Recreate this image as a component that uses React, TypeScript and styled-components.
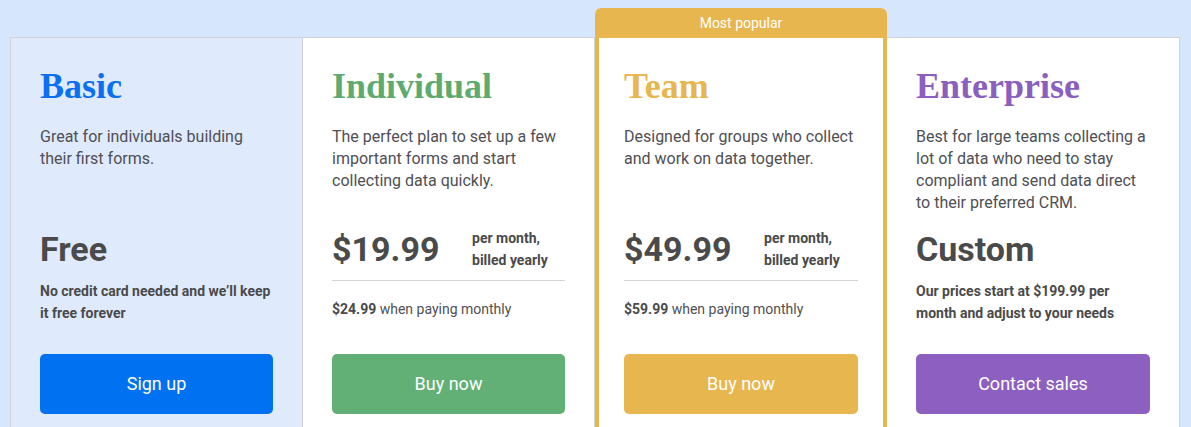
import React from "react";
import styled, { createGlobalStyle } from "styled-components";

const GlobalStyle = createGlobalStyle`
  html, body {
    margin: 0;
    padding: 0;
    background: #d6e6fd;
    font-family: Roboto, "Liberation Sans", Arial, sans-serif;
    overflow: hidden;
  }
  * { box-sizing: border-box; }
`;

const Page = styled.div`
  padding: 8px 10px 40px 10px;
`;

const Grid = styled.div`
  display: grid;
  grid-template-columns: 293px 292px 292px 293px;
  align-items: start;
`;

const Column = styled.div<{ $first?: boolean; $tint?: boolean }>`
  margin-top: 29px;
  border-top: 1px solid #cfd3d9;
  border-right: 1px solid #cfd3d9;
  border-left: ${(p) => (p.$first ? "1px solid #cfd3d9" : "none")};
  border-bottom: 1px solid #cfd3d9;
  background: ${(p) => (p.$tint ? "#dfeafc" : "#ffffff")};
  padding: 27px 29px 40px 29px;
  display: flex;
  flex-direction: column;
`;

const FeaturedColumn = styled.div`
  display: flex;
  flex-direction: column;
  background: #ffffff;
  border-radius: 6px 6px 0 0;
  overflow: hidden;
`;

const Tab = styled.div`
  height: 30px;
  background: #e8b64f;
  color: #ffffff;
  font-size: 14px;
  display: flex;
  align-items: center;
  justify-content: center;
`;

const FeaturedBody = styled.div`
  border: 4px solid #e8b64f;
  border-top: none;
  padding: 27px 25px 40px 25px;
  display: flex;
  flex-direction: column;
`;

const Title = styled.h2<{ $color: string }>`
  margin: 0;
  font-family: "Liberation Serif", "Times New Roman", serif;
  font-weight: 700;
  font-size: 36px;
  line-height: 1.2;
  color: ${(p) => p.$color};
`;

const Description = styled.p`
  margin: 18px 0 0 0;
  font-size: 16px;
  line-height: 22px;
  color: #4f4f55;
  min-height: 88px;
`;

const PriceArea = styled.div`
  margin-top: 13px;
  min-height: 97px;
  display: flex;
  flex-direction: column;
`;

const PriceRow = styled.div<{ $divided?: boolean }>`
  display: flex;
  align-items: center;
  height: ${(p) => (p.$divided ? "54px" : "53px")};
  padding-bottom: ${(p) => (p.$divided ? "9px" : "8px")};
  border-bottom: 1px solid ${(p) => (p.$divided ? "#d3d3d3" : "transparent")};
`;

const Amount = styled.div<{ $fixed?: boolean }>`
  font-size: 34px;
  font-weight: 700;
  line-height: 1.2;
  color: #4a4a4a;
  width: ${(p) => (p.$fixed ? "140px" : "auto")};
  flex: none;
`;

const Period = styled.div`
  font-size: 14px;
  font-weight: 700;
  line-height: 22px;
  color: #4a4a4a;
`;

const Note = styled.div`
  font-size: 14px;
  font-weight: 700;
  line-height: 22px;
  color: #4a4a4a;
`;

const Monthly = styled.div`
  margin-top: 17px;
  font-size: 14px;
  line-height: 22px;
  color: #4f4f55;

  strong {
    font-weight: 700;
    color: #4a4a4a;
  }
`;

const Button = styled.button<{ $bg: string }>`
  margin-top: 30px;
  height: 60px;
  width: 100%;
  border: none;
  border-radius: 5px;
  background: ${(p) => p.$bg};
  color: #ffffff;
  font-family: Roboto, "Liberation Sans", Arial, sans-serif;
  font-size: 18px;
  padding: 0 0 2px 0;
  cursor: pointer;
`;

export default function App() {
  return (
    <>
      <GlobalStyle />
      <Page>
        <Grid>
          <Column $first $tint>
            <Title $color="#0a6ff0">Basic</Title>
            <Description>Great for individuals building their first forms.</Description>
            <PriceArea>
              <PriceRow>
                <Amount>Free</Amount>
              </PriceRow>
              <Note>No credit card needed and we’ll keep it free forever</Note>
            </PriceArea>
            <Button $bg="#0071f0">Sign up</Button>
          </Column>

          <Column>
            <Title $color="#5dab6f">Individual</Title>
            <Description>
              The perfect plan to set up a few important forms and start collecting data quickly.
            </Description>
            <PriceArea>
              <PriceRow $divided>
                <Amount $fixed>$19.99</Amount>
                <Period>
                  per month,
                  <br />
                  billed yearly
                </Period>
              </PriceRow>
              <Monthly>
                <strong>$24.99</strong> when paying monthly
              </Monthly>
            </PriceArea>
            <Button $bg="#62b075">Buy now</Button>
          </Column>

          <FeaturedColumn>
            <Tab>Most popular</Tab>
            <FeaturedBody>
              <Title $color="#e8b64f">Team</Title>
              <Description>Designed for groups who collect and work on data together.</Description>
              <PriceArea>
                <PriceRow $divided>
                  <Amount $fixed>$49.99</Amount>
                  <Period>
                    per month,
                    <br />
                    billed yearly
                  </Period>
                </PriceRow>
                <Monthly>
                  <strong>$59.99</strong> when paying monthly
                </Monthly>
              </PriceArea>
              <Button $bg="#e8b64f">Buy now</Button>
            </FeaturedBody>
          </FeaturedColumn>

          <Column>
            <Title $color="#8b5fc0">Enterprise</Title>
            <Description>
              Best for large teams collecting a lot of data who need to stay compliant and send data
              direct to their preferred CRM.
            </Description>
            <PriceArea>
              <PriceRow>
                <Amount>Custom</Amount>
              </PriceRow>
              <Note>Our prices start at $199.99 per month and adjust to your needs</Note>
            </PriceArea>
            <Button $bg="#8c5fc0">Contact sales</Button>
          </Column>
        </Grid>
      </Page>
    </>
  );
}
